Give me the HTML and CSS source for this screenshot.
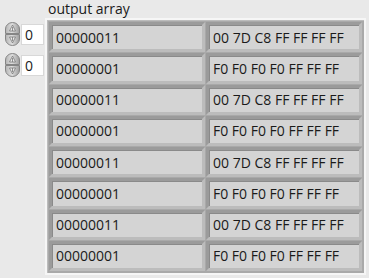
FILE: index.html
```html
<!DOCTYPE html>
<html lang="en">
<head>
    <meta charset="UTF-8">
    <title>output array</title>
    <link rel="stylesheet" href="styles.css">
</head>
<body>
    <div class="panel">
        <div class="indexes">
            <div class="index">
                <svg class="spinner" width="15" height="24" viewBox="0 0 15 24">
                    <defs>
                        <linearGradient id="spinFill" x1="0" y1="0" x2="1" y2="0">
                            <stop offset="0" stop-color="#b4b4b4"/>
                            <stop offset="0.45" stop-color="#dedede"/>
                            <stop offset="1" stop-color="#9c9c9c"/>
                        </linearGradient>
                    </defs>
                    <path d="M0.5 11.5 V7 A7 6.5 0 0 1 14.5 7 V11.5 Z" fill="url(#spinFill)" stroke="#858585"/>
                    <path d="M0.5 12.5 V17 A7 6.5 0 0 0 14.5 17 V12.5 Z" fill="url(#spinFill)" stroke="#858585"/>
                    <path d="M7.5 3 L4.5 9 H10.5 Z" fill="#ececec" stroke="#777" stroke-width="0.8"/>
                    <path d="M7.5 5 V9" stroke="#777" stroke-width="0.8"/>
                    <path d="M7.5 21 L4.5 15 H10.5 Z" fill="#ececec" stroke="#777" stroke-width="0.8"/>
                    <path d="M7.5 15 V19" stroke="#777" stroke-width="0.8"/>
                </svg>
                <div class="index-box">0</div>
            </div>
            <div class="index">
                <svg class="spinner" width="15" height="24" viewBox="0 0 15 24">
                    <path d="M0.5 11.5 V7 A7 6.5 0 0 1 14.5 7 V11.5 Z" fill="url(#spinFill)" stroke="#858585"/>
                    <path d="M0.5 12.5 V17 A7 6.5 0 0 0 14.5 17 V12.5 Z" fill="url(#spinFill)" stroke="#858585"/>
                    <path d="M7.5 3 L4.5 9 H10.5 Z" fill="#ececec" stroke="#777" stroke-width="0.8"/>
                    <path d="M7.5 5 V9" stroke="#777" stroke-width="0.8"/>
                    <path d="M7.5 21 L4.5 15 H10.5 Z" fill="#ececec" stroke="#777" stroke-width="0.8"/>
                    <path d="M7.5 15 V19" stroke="#777" stroke-width="0.8"/>
                </svg>
                <div class="index-box">0</div>
            </div>
        </div>

        <div class="array-control">
            <div class="array-label">output array</div>
            <div class="array-frame">
                <div class="array-grid" id="arrayGrid">
                    <!-- cells are inserted here -->
                </div>
            </div>
        </div>
    </div>

    <script>
        // each row: byte flags, then the data bytes
        const rows = [
            ["00000011", "00 7D C8 FF FF FF FF"],
            ["00000001", "F0 F0 F0 F0 FF FF FF"],
            ["00000011", "00 7D C8 FF FF FF FF"],
            ["00000001", "F0 F0 F0 F0 FF FF FF"],
            ["00000011", "00 7D C8 FF FF FF FF"],
            ["00000001", "F0 F0 F0 F0 FF FF FF"],
            ["00000011", "00 7D C8 FF FF FF FF"],
            ["00000001", "F0 F0 F0 F0 FF FF FF"]
        ];

        const grid = document.getElementById('arrayGrid');
        rows.forEach(row => {
            row.forEach(value => {
                const cell = document.createElement('div');
                cell.className = 'cell';
                cell.textContent = value;
                grid.appendChild(cell);
            });
        });
    </script>
</body>
</html>
```

FILE: styles.css
```css
* {
    margin: 0;
    padding: 0;
    box-sizing: border-box;
}

body {
    background-color: #e9e9e9;
    font-family: 'Open Sans', 'Noto Sans', sans-serif;
    font-size: 14px;
    color: #1a1a1a;
}

.panel {
    display: flex;
    height: 278px;
}

/* index controls */
.indexes {
    width: 45px;
    padding-top: 22px;
    padding-left: 5px;
    display: flex;
    flex-direction: column;
    gap: 7px;
}

.index {
    display: flex;
    align-items: center;
    gap: 1px;
}

.spinner {
    display: block;
    flex: none;
}

.index-box {
    width: 23px;
    height: 21px;
    background-color: #fff;
    border: 1px solid #d8d8d8;
    padding-left: 3px;
    line-height: 19px;
}

/* array */
.array-control {
    display: flex;
    flex-direction: column;
}

.array-label {
    height: 18px;
    line-height: 17px;
    padding-left: 3px;
}

.array-frame {
    width: 321px;
    border: 2px solid #f6f6f6;
    background-color: #a9a9a9;
    padding: 2px;
    box-shadow: inset 1px 1px 0 #bcbcbc;
}

.array-grid {
    display: grid;
    grid-template-columns: 1fr 1fr;
    grid-template-rows: repeat(8, 1fr);
    gap: 1px;
    height: 249px;
}

.cell {
    background-color: #d4d4d4;
    border: 3px solid;
    border-color: #9b9b9b #bcbcbc #bcbcbc #9b9b9b;
    box-shadow: inset 1px 1px 0 #8a8a8a;
    padding-left: 4px;
    display: flex;
    align-items: center;
    white-space: nowrap;
}
```
